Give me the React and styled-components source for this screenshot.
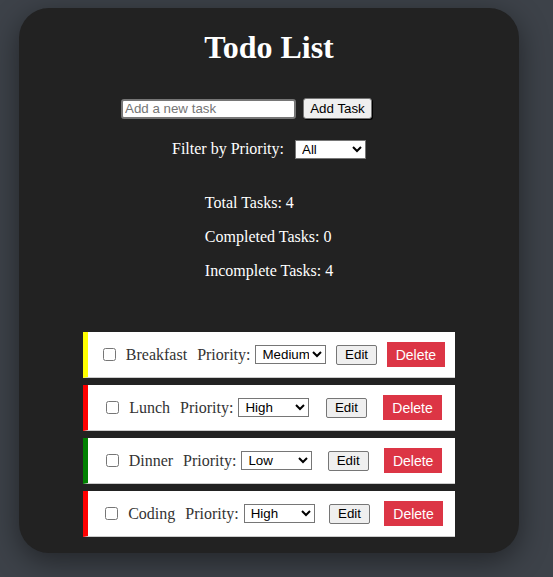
import React, { useState } from 'react';
import styled, { createGlobalStyle } from 'styled-components';

const GlobalStyle = createGlobalStyle`
    html, body {
        margin: 0;
    }
    body {
        min-height: 100vh;
        box-sizing: border-box;
        padding: 8px 0 24px 19px;
        background: #3d4249;
        font-family: "Liberation Serif", "Times New Roman", serif;
    }
`;

const initialTasks = [
    { id: 1, text: 'Breakfast', priority: 'Medium', done: false },
    { id: 2, text: 'Lunch', priority: 'High', done: false },
    { id: 3, text: 'Dinner', priority: 'Low', done: false },
    { id: 4, text: 'Coding', priority: 'High', done: false },
];

const priorityColor = {
    High: '#ff0000',
    Medium: '#ffff00',
    Low: '#008000',
};

export default function App() {
    const [tasks, setTasks] = useState(initialTasks);
    const [filter, setFilter] = useState('All');

    const completed = tasks.filter((t) => t.done).length;

    return (
        <>
            <GlobalStyle />
            <Card>
                <Title>Todo List</Title>

                <AddRow>
                    <TaskInput placeholder="Add a new task" />
                    <AddButton>Add Task</AddButton>
                </AddRow>

                <FilterRow>
                    <FilterLabel>Filter by Priority:</FilterLabel>
                    <Select value={filter} onChange={(e) => setFilter(e.target.value)}>
                        <option>All</option>
                        <option>High</option>
                        <option>Medium</option>
                        <option>Low</option>
                    </Select>
                </FilterRow>

                <Stats>
                    <Stat>Total Tasks: {tasks.length}</Stat>
                    <Stat>Completed Tasks: {completed}</Stat>
                    <Stat>Incomplete Tasks: {tasks.length - completed}</Stat>
                </Stats>

                <TaskList>
                    {tasks.map((task) => (
                        <TaskItem key={task.id} color={priorityColor[task.priority]}>
                            <TaskMain>
                                <Check type="checkbox" checked={task.done} readOnly />
                                <TaskText>{task.text}</TaskText>
                                <PriorityLabel>Priority:</PriorityLabel>
                                <Select value={task.priority} onChange={() => {}}>
                                    <option>High</option>
                                    <option>Medium</option>
                                    <option>Low</option>
                                </Select>
                            </TaskMain>
                            <EditButton>Edit</EditButton>
                            <DeleteButton
                                onClick={() => setTasks(tasks.filter((t) => t.id !== task.id))}
                            >
                                Delete
                            </DeleteButton>
                        </TaskItem>
                    ))}
                </TaskList>
            </Card>
        </>
    );
}

// 스타일

const Card = styled.div`
    width: 500px;
    box-sizing: border-box;
    padding: 21px 0 16px;
    background: #222222;
    border-radius: 30px;
    box-shadow: 0 8px 30px rgba(0, 0, 0, 0.45);
    color: #fff;
`;

const Title = styled.h1`
    margin: 0;
    font-size: 32px;
    line-height: 37px;
    font-weight: bold;
    text-align: center;
`;

const AddRow = styled.div`
    display: flex;
    align-items: center;
    justify-content: center;
    gap: 7px;
    margin-top: 32px;
    padding-right: 45px;
    height: 21px;
`;

const TaskInput = styled.input`
    width: 175px;
    height: 20px;
    box-sizing: border-box;
    padding: 1px 2px;
    border: 2px solid #767676;
    border-radius: 3px;
    font: 13.33px "Liberation Sans", Arial, sans-serif;
    color: #000;
    &::placeholder {
        color: #757575;
    }
`;

const AddButton = styled.button`
    width: 69px;
    height: 21px;
    box-sizing: border-box;
    padding: 0 6px;
    border: 1px solid #767676;
    border-radius: 3px;
    background: #efefef;
    box-shadow: 1px 1px 0 #000;
    font: 13.33px "Liberation Sans", Arial, sans-serif;
    color: #000;
`;

const FilterRow = styled.div`
    display: flex;
    align-items: center;
    justify-content: center;
    gap: 11px;
    margin-top: 20px;
    height: 20px;
`;

const FilterLabel = styled.label`
    font-size: 16px;
    line-height: 18px;
`;

const Select = styled.select`
    width: 71px;
    height: 19px;
    box-sizing: border-box;
    padding: 0 0 0 2px;
    border: 1px solid #767676;
    border-radius: 0;
    background: #fff;
    font: 13.33px "Liberation Sans", Arial, sans-serif;
    color: #000;
`;

const Stats = styled.div`
    width: fit-content;
    margin: 35px auto 0;
    display: flex;
    flex-direction: column;
    gap: 16px;
`;

const Stat = styled.p`
    margin: 0;
    font-size: 16px;
    line-height: 18px;
`;

const TaskList = styled.ul`
    width: 372px;
    margin: 52px auto 0;
    padding: 0;
    list-style: none;
    display: flex;
    flex-direction: column;
    gap: 7px;
`;

const TaskItem = styled.li`
    display: flex;
    align-items: center;
    justify-content: space-around;
    padding: 10px 5px;
    background: #fff;
    border-left: 5px solid ${(props) => props.color};
    border-bottom: 1px solid #cccccc;
    color: #333;
`;

const TaskMain = styled.div`
    display: flex;
    align-items: center;
`;

const Check = styled.input`
    width: 13px;
    height: 13px;
    margin: 0 10px 0 5px;
`;

const TaskText = styled.span`
    font-size: 16px;
    line-height: 18px;
    margin-right: 10px;
`;

const PriorityLabel = styled.span`
    font-size: 16px;
    line-height: 18px;
    margin-right: 5px;
`;

const EditButton = styled.button`
    height: 20px;
    box-sizing: border-box;
    padding: 0 8px;
    border: 1px solid #767676;
    border-radius: 2px;
    background: #efefef;
    font: 13.33px "Liberation Sans", Arial, sans-serif;
    color: #000;
`;

const DeleteButton = styled.button`
    height: 25px;
    padding: 0 9px;
    border: none;
    border-radius: 0;
    background: #dc3545;
    font: 14px "Liberation Sans", Arial, sans-serif;
    color: #fff;
    cursor: pointer;
`;
